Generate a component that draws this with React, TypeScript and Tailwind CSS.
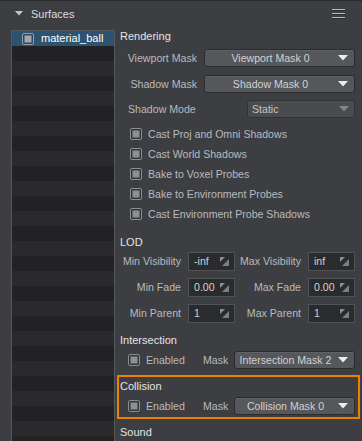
import React from "react";

const Check = ({ sel = false }: { sel?: boolean }) => (
  <svg width="12" height="12" viewBox="0 0 12 12" className="shrink-0">
    <rect x="0.5" y="0.5" width="11" height="11" rx="1.5" fill={sel ? "#33475a" : "#343538"} stroke={sel ? "#8ea0b0" : "#8a8b8e"} />
    <rect x="2.5" y="2.5" width="7" height="7" fill={sel ? "#a3a7ab" : "#8e8f92"} />
  </svg>
);

const Arrow = ({ dim = false }: { dim?: boolean }) => (
  <svg width="10" height="6" viewBox="0 0 10 6" className="shrink-0">
    <polygon points="0,0 10,0 5,5.5" fill={dim ? "#85868a" : "#ececec"} />
  </svg>
);

const Dropdown = ({ text, className = "" }: { text: string; className?: string }) => (
  <div className={"h-[18px] rounded-[3px] border border-[#2a2b2d] bg-[#55575b] shadow-[inset_0_1px_0_#606266] flex items-center " + className}>
    <div className="flex-1 text-center text-[#d2d2d2] pl-[2px]">{text}</div>
    <div className="w-[20px] flex justify-center pr-[2px]">
      <Arrow />
    </div>
  </div>
);

const SpinIcon = () => (
  <svg width="9" height="9" viewBox="0 0 9 9" className="shrink-0">
    <polygon points="0,0 5,0 0,5" fill="#8d8e91" />
    <polygon points="9,2 9,9 2,9" fill="#7c7d80" />
  </svg>
);

const Spin = ({ v }: { v: string }) => (
  <div className="w-[47px] h-[19px] border border-[#505256] bg-[#2a2b2d] flex items-center pl-[5px] pr-[5px] text-[#cfcfcf]">
    <span className="flex-1">{v}</span>
    <SpinIcon />
  </div>
);

const CheckRow = ({ label }: { label: string }) => (
  <div className="h-[20px] flex items-center pl-[10px] gap-[6px]">
    <Check />
    <span>{label}</span>
  </div>
);

const SpinRow = ({ l1, v1, l2, v2 }: { l1: string; v1: string; l2: string; v2: string }) => (
  <div className="flex items-center h-[19px]">
    <div className="w-[68px] text-right pr-[7px]">{l1}</div>
    <Spin v={v1} />
    <div className="w-[73px] text-right pr-[7px]">{l2}</div>
    <Spin v={v2} />
  </div>
);

const MaskRow = ({ text }: { text: string }) => (
  <div className="flex items-center h-[18px]">
    <div className="w-[83px] flex items-center pl-[8px] gap-[6px]">
      <Check />
      <span>Enabled</span>
    </div>
    <div className="w-[31px]">Mask</div>
    <Dropdown text={text} className="flex-1" />
  </div>
);

export default function App() {
  const rows = Array.from({ length: 27 });
  return (
    <div className="w-[362px] h-[441px] overflow-hidden bg-[#3d3e42] text-[#b9babd] text-[10.6px] leading-[13px] font-['Liberation_Sans',Arial,sans-serif] flex flex-col">
      <div className="h-px bg-[#2b2c2f] shrink-0" />
      <div className="h-[26px] shrink-0 flex items-center pl-[15px] pr-[17px]">
        <svg width="8" height="5" viewBox="0 0 8 5" className="mr-[8px] -mt-[1px]">
          <polygon points="0,0 8,0 4,4.5" fill="#c6c6c6" />
        </svg>
        <span className="text-[#dcdcdc] text-[11px]">Surfaces</span>
        <div className="flex-1" />
        <svg width="13" height="10" viewBox="0 0 13 10" className="-mt-[1px]">
          <rect x="0" y="0" width="13" height="1" fill="#b9b9b9" />
          <rect x="0" y="1" width="13" height="1" fill="#2c2d30" />
          <rect x="0" y="4" width="13" height="1" fill="#b9b9b9" />
          <rect x="0" y="5" width="13" height="1" fill="#2c2d30" />
          <rect x="0" y="8" width="13" height="1" fill="#b9b9b9" />
          <rect x="0" y="9" width="13" height="1" fill="#2c2d30" />
        </svg>
      </div>
      <div className="flex flex-1 min-h-0 pt-[3px]">
        <div className="ml-[11px] w-[104px] border border-[#56585c] border-b-0 flex flex-col overflow-hidden shrink-0">
          <div className="h-[15px] bg-[#2d5371] flex items-center pl-[10px] gap-[7px] text-[#ffffff] shrink-0">
            <Check sel />
            <span className="text-[11px]">material_ball</span>
          </div>
          {rows.map((_, i) => (
            <div key={i} className={"h-[15px] shrink-0 " + (i % 2 === 0 ? "bg-[#222224]" : "bg-[#2a2a2c]")} />
          ))}
        </div>
        <div className="flex-1 flex flex-col pl-[5px] pr-[7px]">
          <div className="text-[#e4e4e4] text-[11px]">Rendering</div>
          <div className="flex items-center mt-[6px]">
            <div className="w-[84px] text-right pr-[7px]">Viewport Mask</div>
            <Dropdown text="Viewport Mask 0" className="flex-1" />
          </div>
          <div className="flex items-center mt-[8px]">
            <div className="w-[84px] text-right pr-[7px]">Shadow Mask</div>
            <Dropdown text="Shadow Mask 0" className="flex-1" />
          </div>
          <div className="flex items-center mt-[7px]">
            <div className="pl-[8px] flex-1">Shadow Mode</div>
            <div className="w-[108px] h-[18px] rounded-[3px] border border-[#323335] bg-[#4a4b4f] flex items-center pl-[4px] pr-[5px]">
              <span className="flex-1 text-[#c4c4c4]">Static</span>
              <Arrow dim />
            </div>
          </div>
          <div className="mt-[6px] flex flex-col">
            <CheckRow label="Cast Proj and Omni Shadows" />
            <CheckRow label="Cast World Shadows" />
            <CheckRow label="Bake to Voxel Probes" />
            <CheckRow label="Bake to Environment Probes" />
            <CheckRow label="Cast Environment Probe Shadows" />
          </div>
          <div className="mt-[12px] text-[#e4e4e4] text-[11px]">LOD</div>
          <div className="mt-[3px] flex flex-col gap-[7px]">
            <SpinRow l1="Min Visibility" v1="-inf" l2="Max Visibility" v2="inf" />
            <SpinRow l1="Min Fade" v1="0.00" l2="Max Fade" v2="0.00" />
            <SpinRow l1="Min Parent" v1="1" l2="Max Parent" v2="1" />
          </div>
          <div className="mt-[11px] text-[#e4e4e4] text-[11px]">Intersection</div>
          <div className="mt-[4px]">
            <MaskRow text="Intersection Mask 2" />
          </div>
          <div className="mt-[6px] -ml-[3px] -mr-[5px] border-2 border-[#f07f00] pl-[1px] pr-[3px] pt-[3px] pb-[2px]">
            <div className="text-[#e4e4e4] text-[11px]">Collision</div>
            <div className="mt-[4px]">
              <MaskRow text="Collision Mask 0" />
            </div>
          </div>
          <div className="mt-[7px] text-[#e4e4e4] text-[11px]">Sound</div>
        </div>
      </div>
    </div>
  );
}
